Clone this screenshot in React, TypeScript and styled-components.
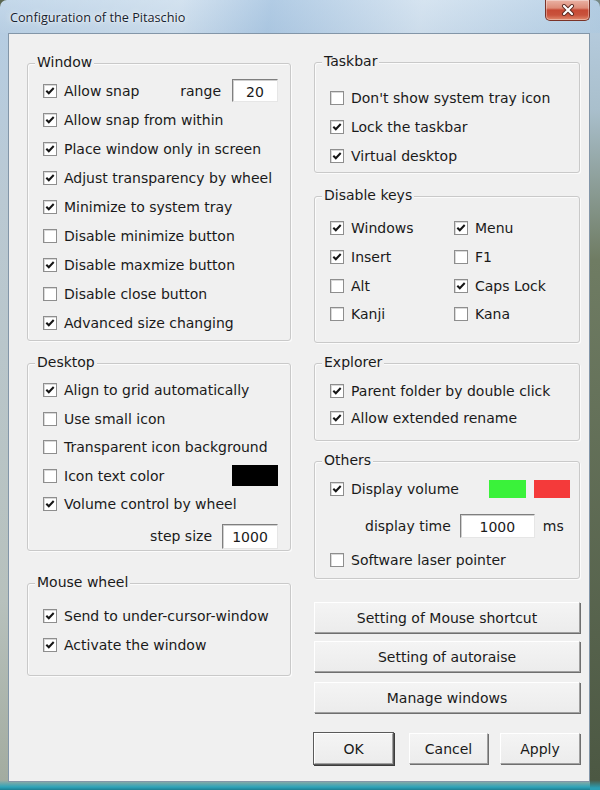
import React from 'react';
import styled, { createGlobalStyle } from 'styled-components';

const Global = createGlobalStyle`
  html, body { margin: 0; padding: 0; }
  body {
    width: 600px; height: 790px; overflow: hidden;
    background: #5b6651;
    font-family: "DejaVu Sans", "Liberation Sans", sans-serif;
  }
`;

const Frame = styled.div`
  width: 600px;
  height: 790px;
  box-sizing: border-box;
  display: flex;
  flex-direction: column;
  padding: 0 10px 8px 8px;
  border-radius: 7px 7px 0 0;
  background:
    linear-gradient(180deg, #b9cfe3 0px, #a9bfcc 110px, #6f7c63 260px, #4c5843 780px, #2a9fb5 788px) right top / 10px 100% no-repeat,
    linear-gradient(180deg, #c4d8ea 0px, #b6cde2 34px, #bac9d3 200px, #b7c1bd 600px, #a3aca0 780px, #2ea3b8 787px, #1c7f93 790px);
`;

const TitleBar = styled.div`
  height: 33px;
  flex: none;
  display: flex;
  align-items: flex-start;
  justify-content: space-between;
  background: linear-gradient(100deg, rgba(255,255,255,0) 0%, rgba(255,255,255,0.25) 30%, rgba(150,185,220,0.4) 45%, rgba(255,255,255,0.3) 70%, rgba(165,198,225,0.35) 100%);
  margin: 0 -10px 0 -8px;
  padding: 0 10px 0 10px;
`;

const Title = styled.div`
  padding-top: 8px;
  font-family: "Open Sans", "Liberation Sans", sans-serif;
  font-size: 12.7px;
  color: #16222f;
  text-shadow: 0 0 6px rgba(255,255,255,0.9), 0 0 2px rgba(255,255,255,0.9);
`;

const CloseButton = styled.div`
  width: 45px;
  height: 21px;
  box-sizing: border-box;
  border: 1px solid #7a3328;
  border-top: none;
  border-radius: 0 0 5px 5px;
  background: linear-gradient(180deg, #eab2a4 0%, #dd8c78 40%, #c64a35 50%, #c9523c 75%, #e08a6e 100%);
  display: flex;
  align-items: center;
  justify-content: center;
  box-shadow: inset 0 0 0 1px rgba(255,255,255,0.35);
`;

const Client = styled.div`
  flex: 1;
  display: flex;
  background: #f0f0f0;
  border: 1px solid #8396a8;
  padding: 0 9px 0 18px;
  gap: 23px;
`;

const Column = styled.div<{ $w: number }>`
  width: ${p => p.$w}px;
  display: flex;
  flex-direction: column;
`;

const Group = styled.div<{ $mt: number; $h: number; $pt: number; $pr?: number }>`
  position: relative;
  margin-top: ${p => p.$mt}px;
  height: ${p => p.$h}px;
  flex: none;
  box-sizing: border-box;
  border: 1px solid #c9c9c9;
  border-radius: 3px;
  padding: ${p => p.$pt}px ${p => p.$pr ?? 12}px 0 15px;
  box-shadow: inset 1px 1px 0 #fbfbfb, 1px 1px 0 #fbfbfb;
`;

const Legend = styled.span`
  position: absolute;
  top: -10px;
  left: 7px;
  padding: 0 2px;
  background: #f0f0f0;
  font-size: 14px;
  line-height: 17px;
  color: #1a1a1a;
`;

const Row = styled.div<{ $h?: number; $mt?: number; $indent?: number; $end?: boolean }>`
  display: flex;
  align-items: center;
  height: ${p => p.$h ?? 29}px;
  margin-top: ${p => p.$mt ?? 0}px;
  padding-left: ${p => p.$indent ?? 0}px;
  justify-content: ${p => (p.$end ? 'flex-end' : 'flex-start')};
`;

const KeyGrid = styled.div`
  display: grid;
  grid-template-columns: 124px 1fr;
  grid-auto-rows: 28.7px;
`;

const Box = styled.span`
  width: 14px;
  height: 14px;
  flex: none;
  box-sizing: border-box;
  border: 1px solid #8e8e8e;
  background: #ffffff;
  box-shadow: inset 1px 1px 0 #d9d9d9;
  display: flex;
  align-items: center;
  justify-content: center;
`;

const Label = styled.span<{ $ml?: number }>`
  margin-left: ${p => p.$ml ?? 7}px;
  font-size: 14px;
  color: #1a1a1a;
  white-space: nowrap;
`;

const Spacer = styled.span`
  flex: 1;
`;

const Field = styled.input<{ $w: number; $h: number }>`
  width: ${p => p.$w}px;
  height: ${p => p.$h}px;
  box-sizing: border-box;
  border: 1px solid;
  border-color: #7f7f7f #e6e6e6 #e6e6e6 #7f7f7f;
  box-shadow: inset 1px 1px 0 #cfcfcf;
  background: #ffffff;
  font-family: "DejaVu Sans", sans-serif;
  font-size: 14px;
  color: #1a1a1a;
  text-align: center;
  padding: 2px 0 0 0;
  outline: none;
`;

const Swatch = styled.span<{ $w: number; $h: number; $c: string; $ml?: number }>`
  width: ${p => p.$w}px;
  height: ${p => p.$h}px;
  margin-left: ${p => p.$ml ?? 0}px;
  background: ${p => p.$c};
  flex: none;
`;

const Button = styled.button<{ $mt: number; $w?: number; $default?: boolean }>`
  margin-top: ${p => p.$mt}px;
  width: ${p => (p.$w ? `${p.$w}px` : '100%')};
  height: 31px;
  flex: none;
  box-sizing: border-box;
  background: linear-gradient(180deg, #f4f4f4, #ececec);
  border: 1px solid;
  border-color: #ffffff #a0a0a0 #a0a0a0 #ffffff;
  box-shadow: ${p => (p.$default ? '0 0 0 1px #5a5a5a, 1px 1px 0 1px #3c3c3c' : '1px 1px 0 #6f6f6f')};
  font-family: "DejaVu Sans", sans-serif;
  font-size: 14px;
  color: #1a1a1a;
  padding: 0;
  cursor: default;
`;

const ButtonRow = styled.div`
  display: flex;
  margin-top: 20px;
`;

const Gap = styled.span<{ $w: number }>`
  width: ${p => p.$w}px;
  flex: none;
`;

const Check = ({ on }: { on: boolean }) => (
  <Box>
    {on && (
      <svg width="10" height="10" viewBox="0 0 10 10">
        <path d="M1.3 4.8 L3.8 7.3 L8.7 2" fill="none" stroke="#151515" strokeWidth="2" />
      </svg>
    )}
  </Box>
);

const Item = ({ on, text }: { on: boolean; text: string }) => (
  <>
    <Check on={on} />
    <Label>{text}</Label>
  </>
);

export default function App() {
  return (
    <>
      <Global />
      <Frame>
        <TitleBar>
          <Title>Configuration of the Pitaschio</Title>
          <CloseButton>
            <svg width="14" height="12" viewBox="0 0 14 12">
              <path d="M3 2 L11 10 M11 2 L3 10" stroke="#5a2a22" strokeWidth="4" strokeLinecap="round" />
              <path d="M3 2 L11 10 M11 2 L3 10" stroke="#ffffff" strokeWidth="2.2" strokeLinecap="round" />
            </svg>
          </CloseButton>
        </TitleBar>
        <Client>
          <Column $w={264}>
            <Group $mt={29} $h={278} $pt={12}>
              <Legend>Window</Legend>
              <Row>
                <Item on text="Allow snap" />
                <Spacer />
                <Label>range</Label>
                <Label $ml={11}>
                  <Field $w={46} $h={23} value="20" readOnly />
                </Label>
              </Row>
              <Row><Item on text="Allow snap from within" /></Row>
              <Row><Item on text="Place window only in screen" /></Row>
              <Row><Item on text="Adjust transparency by wheel" /></Row>
              <Row><Item on text="Minimize to system tray" /></Row>
              <Row><Item on={false} text="Disable minimize button" /></Row>
              <Row><Item on text="Disable maxmize button" /></Row>
              <Row><Item on={false} text="Disable close button" /></Row>
              <Row><Item on text="Advanced size changing" /></Row>
            </Group>

            <Group $mt={22} $h={188} $pt={12}>
              <Legend>Desktop</Legend>
              <Row $h={28.5}><Item on text="Align to grid automatically" /></Row>
              <Row $h={28.5}><Item on={false} text="Use small icon" /></Row>
              <Row $h={28.5}><Item on={false} text="Transparent icon background" /></Row>
              <Row $h={28.5}>
                <Item on={false} text="Icon text color" />
                <Spacer />
                <Swatch $w={46} $h={21} $c="#000000" />
              </Row>
              <Row $h={28.5}><Item on text="Volume control by wheel" /></Row>
              <Row $end $mt={3}>
                <Label>step size</Label>
                <Label $ml={10}>
                  <Field $w={56} $h={25} value="1000" readOnly />
                </Label>
              </Row>
            </Group>

            <Group $mt={32} $h={93} $pt={17}>
              <Legend>Mouse wheel</Legend>
              <Row><Item on text="Send to under-cursor-window" /></Row>
              <Row><Item on text="Activate the window" /></Row>
            </Group>
          </Column>

          <Column $w={266}>
            <Group $mt={28} $h={111} $pt={20}>
              <Legend>Taskbar</Legend>
              <Row><Item on={false} text="Don't show system tray icon" /></Row>
              <Row><Item on text="Lock the taskbar" /></Row>
              <Row><Item on text="Virtual desktop" /></Row>
            </Group>

            <Group $mt={23} $h={147} $pt={17}>
              <Legend>Disable keys</Legend>
              <KeyGrid>
                <Row $h={28.7}><Item on text="Windows" /></Row>
                <Row $h={28.7}><Item on text="Menu" /></Row>
                <Row $h={28.7}><Item on text="Insert" /></Row>
                <Row $h={28.7}><Item on={false} text="F1" /></Row>
                <Row $h={28.7}><Item on={false} text="Alt" /></Row>
                <Row $h={28.7}><Item on text="Caps Lock" /></Row>
                <Row $h={28.7}><Item on={false} text="Kanji" /></Row>
                <Row $h={28.7}><Item on={false} text="Kana" /></Row>
              </KeyGrid>
            </Group>

            <Group $mt={20} $h={78} $pt={13}>
              <Legend>Explorer</Legend>
              <Row $h={27}><Item on text="Parent folder by double click" /></Row>
              <Row $h={27}><Item on text="Allow extended rename" /></Row>
            </Group>

            <Group $mt={20} $h={118} $pt={12} $pr={9}>
              <Legend>Others</Legend>
              <Row>
                <Item on text="Display volume" />
                <Spacer />
                <Swatch $w={37} $h={18} $c="#3af23a" />
                <Swatch $w={36} $h={18} $c="#f43a3a" $ml={8} />
              </Row>
              <Row $mt={8} $indent={35}>
                <Label $ml={0}>display time</Label>
                <Label $ml={9}>
                  <Field $w={75} $h={24} value="1000" readOnly />
                </Label>
                <Label $ml={8}>ms</Label>
              </Row>
              <Row $mt={5}><Item on={false} text="Software laser pointer" /></Row>
            </Group>

            <Button $mt={23}>Setting of Mouse shortcut</Button>
            <Button $mt={8}>Setting of autoraise</Button>
            <Button $mt={10}>Manage windows</Button>
            <ButtonRow>
              <Button $mt={0} $w={79} $default>OK</Button>
              <Gap $w={16} />
              <Button $mt={0} $w={79}>Cancel</Button>
              <Gap $w={12} />
              <Button $mt={0} $w={80}>Apply</Button>
            </ButtonRow>
          </Column>
        </Client>
      </Frame>
    </>
  );
}
